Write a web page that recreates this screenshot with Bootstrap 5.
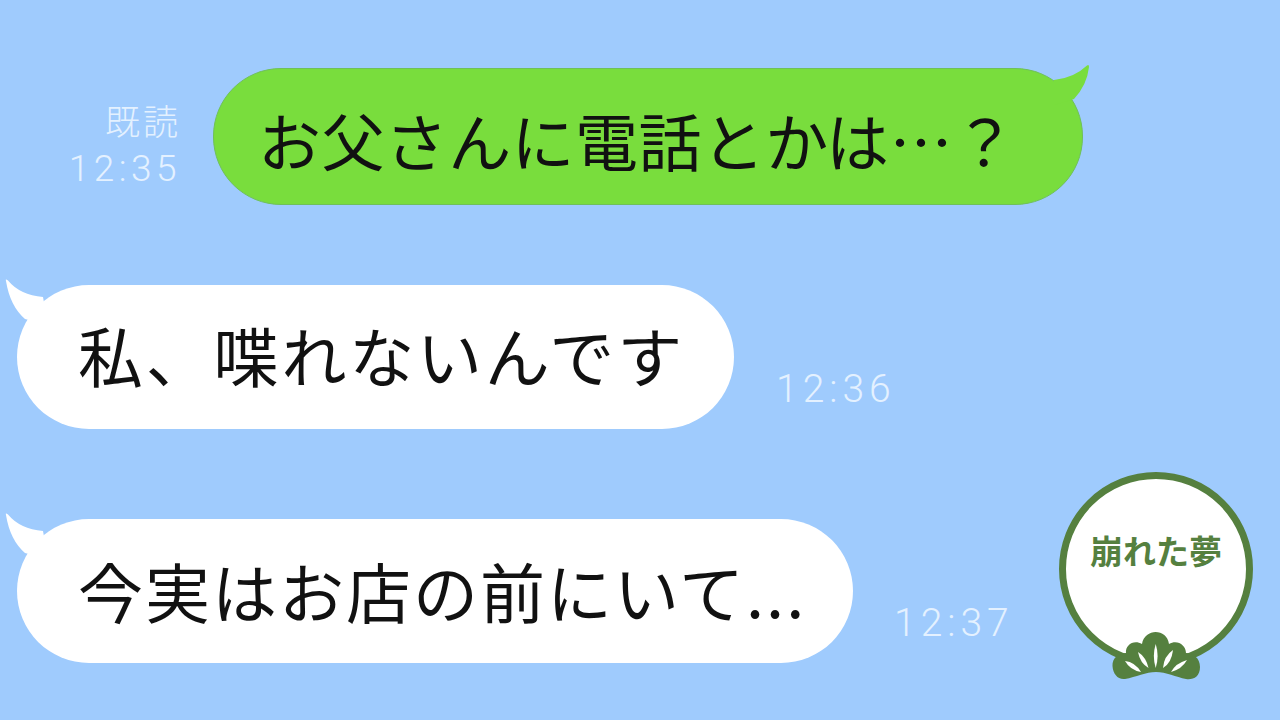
<!DOCTYPE html>
<html lang="ja">
<head>
  <meta charset="UTF-8">
  <title>崩れた夢</title>
  <link href="https://cdn.jsdelivr.net/npm/bootstrap@5.3.0/dist/css/bootstrap.min.css" rel="stylesheet">
  <style>
    body {
      background: #9fcbfd;
      font-family: "Noto Sans CJK JP", "Liberation Sans", sans-serif;
      height: 720px;
      overflow: hidden;
    }
    .chat-page {
      height: 720px;
      padding-top: 68px;
    }
    .msg-row-a { margin-bottom: 80px; padding-left: 61px; }
    .msg-row-b { margin-bottom: 90px; padding-left: 17px; }
    .msg-row-c { padding-left: 17px; }
    .bubble {
      color: #111;
      line-height: 1;
      white-space: nowrap;
    }
    .bubble-green {
      background: #79dd3d;
      border: 1px solid #6fc05a;
      border-radius: 68px;
      width: 870px;
      height: 137px;
      padding-left: 44px;
      padding-top: 38px;
      font-size: 63px;
      letter-spacing: .4px;
    }
    .bubble-white {
      background: #fff;
      border-radius: 72px;
      height: 144px;
      padding-left: 61px;
      font-size: 65px;
    }
    .w-two { width: 717px; padding-top: 37px; letter-spacing: 2.8px; }
    .w-three { width: 836px; padding-top: 39px; letter-spacing: 2px; }
    .bubble-tail { position: absolute; }
    .tail-green { left: 836px; top: -6px; }
    .tail-white { left: -17px; top: -10px; }
    .read-info {
      width: 120px;
      margin-right: 32px;
      text-align: right;
      padding-top: 32px;
    }
    .read-label {
      color: #e4f1ff;
      font-size: 35px;
      font-weight: 300;
      line-height: 40px;
      letter-spacing: 3px;
    }
    .time-label {
      font-family: Roboto, "Liberation Sans", sans-serif;
      font-weight: 300;
      font-size: 39px;
      line-height: 44px;
      letter-spacing: 5px;
      color: #e4f1ff;
    }
    .read-info .time-label {
      font-size: 37px;
      letter-spacing: 4.5px;
      padding-top: 7px;
    }
    .time-two { margin-left: 42px; padding-top: 82px; }
    .time-three { margin-left: 41px; padding-top: 82px; }
    .stamp {
      position: absolute;
      left: 1059px;
      top: 472px;
      width: 194px;
      height: 194px;
      background: #fff;
      border: 7px solid #55803f;
      border-radius: 50%;
      color: #55803f;
      font-size: 33px;
      font-weight: 700;
      line-height: 1;
      text-align: center;
      padding-top: 55px;
      white-space: nowrap;
    }
    .stamp-pine { position: absolute; left: 1110px; top: 630px; }
  </style>
</head>
<body>
  <div class="chat-page position-relative">

    <!-- 1 -->
    <div class="d-flex msg-row-a">
      <div class="read-info">
        <div class="read-label">既読</div>
        <div class="time-label">12:35</div>
      </div>
      <div class="bubble bubble-green position-relative">
        お父さんに電話とかは…？
        <svg class="bubble-tail tail-green" width="42" height="42" viewBox="0 0 42 42">
          <path d="M4 17 Q24 15 37 2.5 Q39 1 39 4 Q37 22 24 36 L4 42 Z" fill="#79dd3d"/>
        </svg>
      </div>
    </div>

    <!-- 2 -->
    <div class="d-flex msg-row-b">
      <div class="bubble bubble-white w-two position-relative">
        私、喋れないんです
        <svg class="bubble-tail tail-white" width="50" height="50" viewBox="0 0 50 50">
          <path d="M6 6 Q5 3.5 8 5.5 Q20 20 43 22 L48 50 L25 44 Q10 31 6 6 Z" fill="#fff"/>
        </svg>
      </div>
      <div class="time-label time-two">12:36</div>
    </div>

    <!-- 3 -->
    <div class="d-flex msg-row-c">
      <div class="bubble bubble-white w-three position-relative">
        今実はお店の前にいて...
        <svg class="bubble-tail tail-white" width="50" height="50" viewBox="0 0 50 50">
          <path d="M6 6 Q5 3.5 8 5.5 Q20 20 43 22 L48 50 L25 44 Q10 31 6 6 Z" fill="#fff"/>
        </svg>
      </div>
      <div class="time-label time-three">12:37</div>
    </div>

    <!-- stamp -->
    <div class="stamp">崩れた夢</div>
    <svg class="stamp-pine" width="92" height="52" viewBox="0 0 92 52">
      <path d="M2.5 36 C2 28 9 23 16 23 C15 15 24 9 32 14 C33 6 40 2 45.5 2 C52 2 58 6 59 14 C67 9 76 15 76 23 C83 23 90 28 90 37 C90 47 83 50 76 49 C66 47 56 42 46 42 C36 42 26 47 15 49 C8 50 3 44 2.5 36 Z" fill="#55803f"/>
      <g fill="#fff">
        <path d="M45.7 14 Q49.5 26 45.7 38 Q42 26 45.7 14 Z"/>
        <path d="M28 22 Q36 27 38.5 38 Q30 33 28 22 Z"/>
        <path d="M63 20 Q61.5 33 53 38 Q54 26 63 20 Z"/>
        <path d="M15 31 Q25 32 31 42 Q20 40 15 31 Z"/>
        <path d="M77 30 Q72 39 61 42 Q66 33 77 30 Z"/>
      </g>
    </svg>
  </div>
  <script src="https://cdn.jsdelivr.net/npm/bootstrap@5.3.0/dist/js/bootstrap.bundle.min.js"></script>
</body>
</html>
